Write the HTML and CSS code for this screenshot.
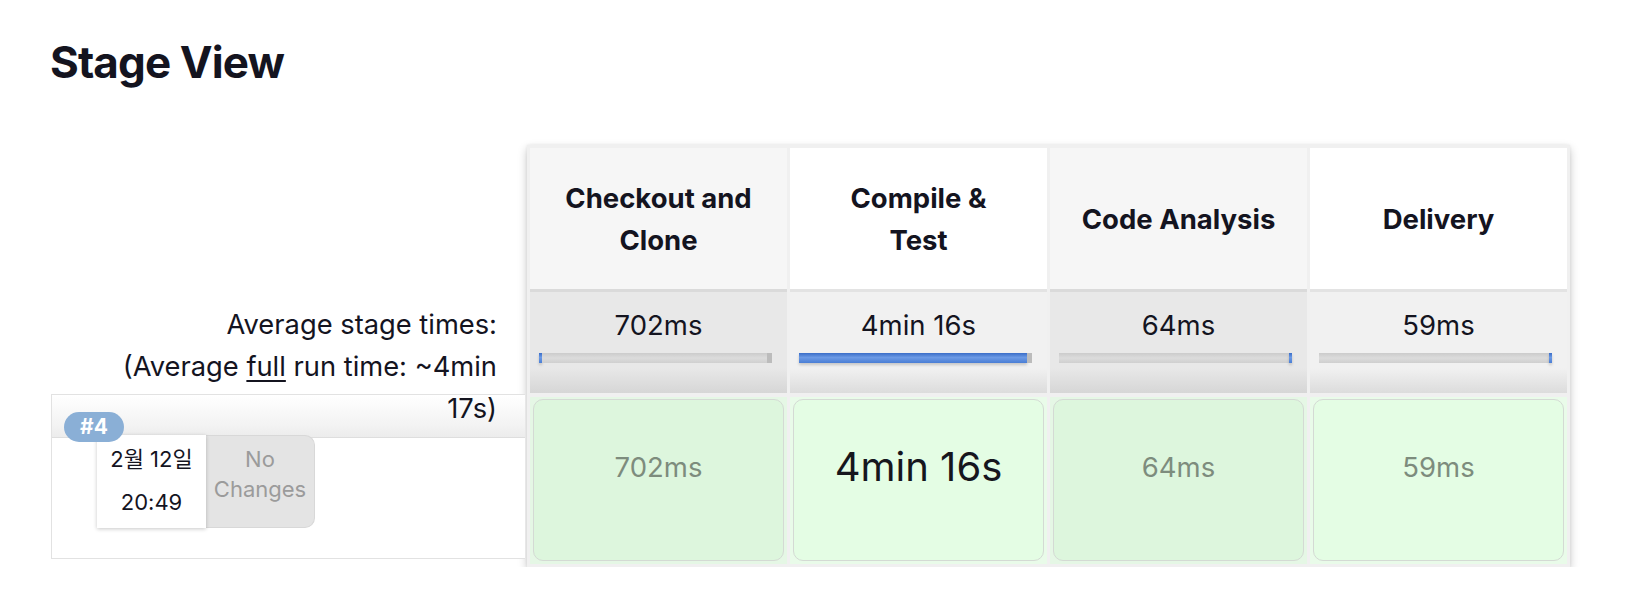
FILE: index.html
```html
<!DOCTYPE html>
<html lang="ko">
<head>
<meta charset="utf-8">
<title>Stage View</title>
<link rel="stylesheet" href="styles.css">
</head>
<body>
<div class="page">
  <h2 class="title">Stage View</h2>
  <div class="stage-view">
    <div class="jobs">
      <div class="jobs-head"></div>
      <div class="avg-label">Average stage times:<br>(Average <u>full</u> run time: ~4min 17s)</div>
      <div class="run">
        <span class="badge">#4</span>
        <div class="run-info">
          <div class="date">2월 12일<br>20:49</div>
          <div class="changes">No<br>Changes</div>
        </div>
      </div>
    </div>
    <div class="stages">
      <div class="stage">
        <div class="stage-head"><span class="head-text">Checkout and Clone</span></div>
        <div class="stage-avg">
          <div>702ms</div>
          <div class="bar"><span class="seg-fill fixed"></span><span class="seg-track"></span><span class="seg-cap"></span></div>
        </div>
        <div class="stage-run"><div class="run-box">702ms</div></div>
      </div>
      <div class="stage alt">
        <div class="stage-head"><span class="head-text">Compile &amp; Test</span></div>
        <div class="stage-avg">
          <div>4min 16s</div>
          <div class="bar"><span class="seg-fill grow"></span><span class="seg-cap"></span></div>
        </div>
        <div class="stage-run"><div class="run-box big">4min 16s</div></div>
      </div>
      <div class="stage">
        <div class="stage-head"><span class="head-text">Code Analysis</span></div>
        <div class="stage-avg">
          <div>64ms</div>
          <div class="bar"><span class="seg-track"></span><span class="seg-fill fixed"></span></div>
        </div>
        <div class="stage-run"><div class="run-box">64ms</div></div>
      </div>
      <div class="stage alt">
        <div class="stage-head"><span class="head-text">Delivery</span></div>
        <div class="stage-avg">
          <div>59ms</div>
          <div class="bar"><span class="seg-track"></span><span class="seg-fill fixed"></span></div>
        </div>
        <div class="stage-run"><div class="run-box">59ms</div></div>
      </div>
    </div>
  </div>
</div>
</body>
</html>
```

FILE: styles.css
```css
html, body {
  margin: 0;
  padding: 0;
  background: #ffffff;
}

body {
  font-family: Inter, "Noto Sans CJK KR", "Noto Sans", sans-serif;
  color: #14141f;
}

.page {
  padding: 36px 0 0 50px;
}

.title {
  margin: 0 0 57px 0;
  font-size: 44px;
  line-height: 52px;
  font-weight: 700;
  letter-spacing: -0.9px;
  color: #14141f;
}

.stage-view {
  display: flex;
  align-items: flex-start;
  gap: 2px;
}

/* left column */
.jobs {
  width: 474px;
  margin-left: 1px;
  padding-top: 3px;
}

.jobs-head {
  height: 141px;
}

.avg-label {
  position: relative;
  z-index: 1;
  height: 104px;
  box-sizing: border-box;
  padding: 15px 28px 0 40px;
  text-align: right;
  font-size: 27.3px;
  line-height: 42px;
}

.avg-label u {
  text-decoration-thickness: 2px;
  text-underline-offset: 4px;
}

.run {
  position: relative;
  height: 165px;
  margin-top: 1px;
  box-sizing: border-box;
  border: 1px solid #e2e2e2;
  border-right: 0;
  background: linear-gradient(to bottom, #ffffff 0, #f3f3f3 30px, #ececec 42px, #dedede 42px, #dedede 43px, #ffffff 43px);
}

.badge {
  position: absolute;
  z-index: 2;
  left: 12px;
  top: 17px;
  height: 30px;
  padding: 0 16px;
  border-radius: 15px;
  background: #8aafd6;
  color: #ffffff;
  font-weight: 700;
  font-size: 21px;
  line-height: 30px;
}

.run-info {
  display: flex;
  margin: 40px 0 0 45px;
}

.date {
  position: relative;
  width: 109px;
  height: 93px;
  box-sizing: border-box;
  padding-top: 3px;
  background: #ffffff;
  box-shadow: 0 1px 4px rgba(0, 0, 0, 0.22);
  text-align: center;
  font-size: 22px;
  line-height: 43px;
  color: #14141f;
}

.changes {
  width: 109px;
  height: 93px;
  box-sizing: border-box;
  padding-top: 8px;
  background: #e4e4e4;
  border: 1px solid #d8d8d8;
  border-left: 0;
  border-radius: 0 10px 10px 0;
  text-align: center;
  font-size: 22px;
  line-height: 30px;
  color: #9b9b9b;
}

/* stage table */
.stages {
  display: flex;
  gap: 3px;
  width: 1043px;
  box-sizing: border-box;
  padding: 3px;
  background: #f0f0f0;
  box-shadow: 0 4px 9px rgba(0, 0, 0, 0.22), 0 0 3px rgba(0, 0, 0, 0.07);
}

.stage {
  flex: 1 1 0;
  min-width: 0;
  display: flex;
  flex-direction: column;
}

.stage-head {
  height: 141px;
  display: flex;
  align-items: center;
  justify-content: center;
  background: #f6f6f6;
  text-align: center;
}

.stage.alt .stage-head {
  background: #ffffff;
}

.head-text {
  max-width: 196px;
  font-size: 27.5px;
  line-height: 42px;
  font-weight: 700;
}

.stage-avg {
  height: 104px;
  box-sizing: border-box;
  padding-top: 15px;
  text-align: center;
  font-size: 27.5px;
  line-height: 42px;
  background: linear-gradient(to bottom, #dadada 0, #dadada 3px, #e8e8e8 3px, #e8e8e8 76%, #d6d6d6 100%);
}

.stage.alt .stage-avg {
  background: linear-gradient(to bottom, #e3e3e3 0, #e3e3e3 3px, #f1f1f1 3px, #f1f1f1 76%, #dcdcdc 100%);
}

.bar {
  display: flex;
  width: 233px;
  height: 10px;
  margin: 7px 0 0 9px;
}

.seg-track {
  flex: 1 1 auto;
  background: linear-gradient(to bottom, #cbcbcb, #dcdcdc 50%, #cfcfcf);
}

.seg-cap {
  width: 5px;
  background: #bcbcbc;
}

.seg-fill {
  background: linear-gradient(to bottom, #3b6ec8, #6c9ae5 45%, #4a7ed5);
  box-shadow: 0 2px 3px rgba(0, 0, 0, 0.18);
}

.seg-fill.fixed {
  width: 3px;
}

.seg-fill.grow {
  flex: 1 1 auto;
}

.stage-run {
  height: 167px;
  margin-top: 4px;
  box-sizing: border-box;
  padding: 2px 3px 3px;
  background: #e5f7e5;
}

.stage.alt .stage-run {
  background: #e9fbe9;
}

.run-box {
  height: 100%;
  box-sizing: border-box;
  padding-top: 46px;
  border: 1.5px solid #d4dad4;
  border-radius: 10px;
  background: #ddf6dd;
  text-align: center;
  font-size: 27.5px;
  line-height: 42px;
  color: #7d8c7d;
}

.stage.alt .run-box {
  background: #e4fde4;
}

.run-box.big {
  font-size: 40px;
  color: #16161d;
}
```
